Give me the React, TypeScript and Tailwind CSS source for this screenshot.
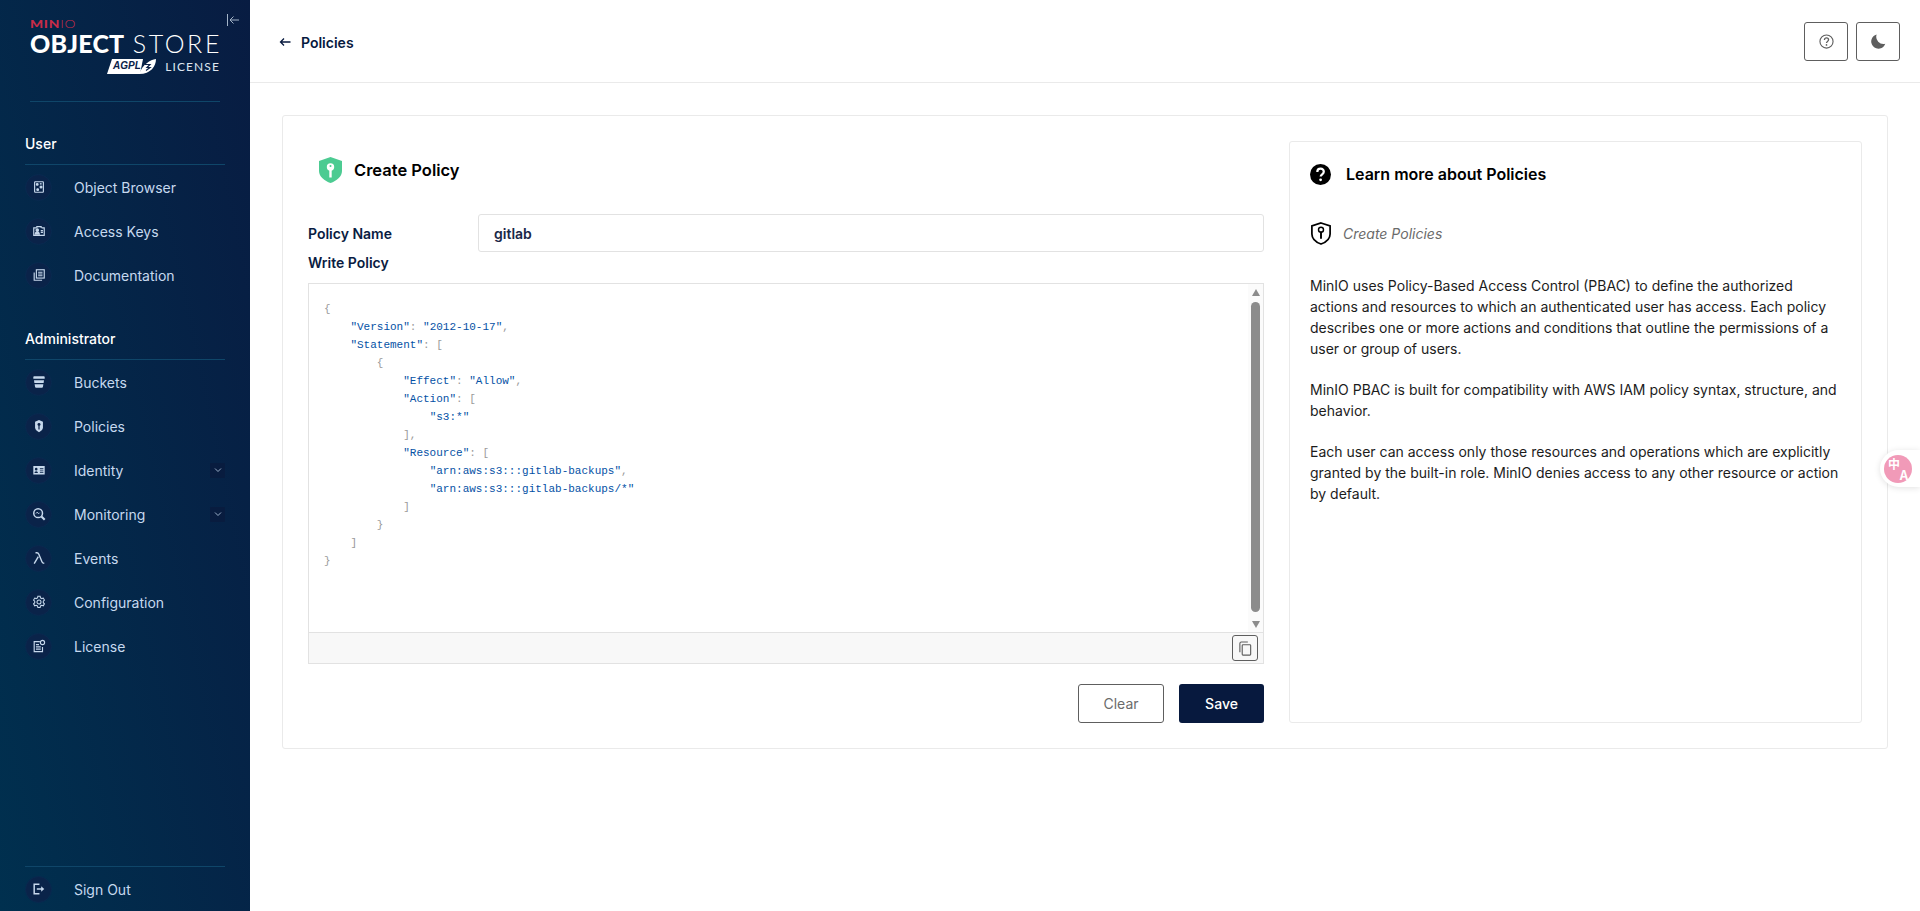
import React from "react";

const S = { viewBox: "0 0 16 16", className: "w-[14px] h-[14px]", fill: "none", stroke: "currentColor", strokeWidth: 1.3 } as const;

const I = {
  browser: (
    <svg {...S}>
      <rect x="3" y="2" width="10" height="12" rx="0.6" />
      <circle cx="6" cy="5" r="1" fill="currentColor" />
      <circle cx="10.3" cy="8" r="1.1" fill="currentColor" />
      <circle cx="6.5" cy="11" r="1" fill="currentColor" />
      <rect x="9" y="3.6" width="2" height="1.6" fill="currentColor" stroke="none" />
    </svg>
  ),
  keys: (
    <svg {...S}>
      <path d="M5 4.5H2v8.5h12V4.5h-3" />
      <circle cx="6" cy="7" r="1.4" fill="currentColor" />
      <path d="M3.6 11.5c.2-1.6 1.2-2.2 2.4-2.2s2.2.6 2.4 2.2z" fill="currentColor" />
      <path d="M10 7.5h2.5M10 9.5h2.5" />
      <path d="M5.5 4.5V3h5v1.5" />
    </svg>
  ),
  docs: (
    <svg {...S}>
      <rect x="5" y="2" width="9" height="9.5" />
      <path d="M2.5 5v9h9" />
      <path d="M7 4.8h5M7 6.8h5M7 8.8h5" />
    </svg>
  ),
  bucket: (
    <svg viewBox="0 0 16 16" className="w-[14px] h-[14px]" fill="currentColor">
      <path d="M1.5 2.400c0-.5.400-.9.900-.9h11.200c.5 0 .9.400.9.9v2H1.500z" />
      <path d="M2.300 6h11.400l-.4 3H2.700z" />
      <path d="M3 10.500h10l-.5 3c-.1.6-.5 1-1.100 1H4.600c-.6 0-1-.4-1.100-1z" />
    </svg>
  ),
  policy: (
    <svg viewBox="0 0 16 16" className="w-[14px] h-[14px]">
      <path d="M8 1.200 12.500 3.200V9.500C12.500 12.300 10.300 14 8 15 5.700 14 3.500 12.300 3.500 9.500V3.200z" fill="currentColor" />
      <circle cx="8" cy="6.300" r="1.700" fill="#0a2148" />
      <path d="M7.300 7.500h1.400v4.500H7.300z" fill="#0a2148" />
    </svg>
  ),
  identity: (
    <svg viewBox="0 0 16 16" className="w-[14px] h-[14px]" fill="currentColor">
      <path fillRule="evenodd" d="M1.500 3.500h13v9.500h-13zM4.800 5.500a1.500 1.500 0 1 0 0 3 1.500 1.500 0 0 0 0-3zM2.800 11.500h4c0-1.300-.8-2.200-2-2.200s-2 .9-2 2.200zM9 6v1h4V6zM9 8.500v1h4v-1zM9 10.500v1h4v-1z" />
    </svg>
  ),
  monitor: (
    <svg {...S} strokeWidth={1.7}>
      <circle cx="7" cy="7" r="5" />
      <path d="M10.800 10.800 14.500 14.500" strokeWidth={2.4} />
      <path d="M4.500 7.500 6 5.800l1.500 2 1.200-1.300" strokeWidth={1} />
    </svg>
  ),
  lambda: (
    <svg viewBox="0 0 16 16" className="w-[14px] h-[14px]" fill="none" stroke="currentColor" strokeWidth={1.600}>
      <path d="M2.500 14.500 7.200 6.500M4 2h1.600c1.200 0 1.700.6 2.200 1.800L11.500 12.500c.4 1 1 1.500 2.500 1.500" />
    </svg>
  ),
  gear: (
    <svg {...S} strokeWidth={1.2}>
      <path d="M6.700 1.500h2.600l.4 1.800 1.500.8 1.700-.6 1.300 2.300-1.300 1.200v1.800l1.300 1.200-1.300 2.300-1.700-.6-1.500.8-.4 1.800H6.700l-.4-1.800-1.500-.8-1.700.6-1.300-2.300 1.300-1.200V7l-1.300-1.200 1.300-2.300 1.700.6 1.500-.8z" />
      <circle cx="8" cy="8" r="2.300" />
    </svg>
  ),
  license: (
    <svg {...S}>
      <path d="M9 3H2.500v11.500h9.500V9" />
      <circle cx="12" cy="4" r="2.400" />
      <path d="M4.500 6.500H8M4.500 9H10M4.500 11.500H10" />
    </svg>
  ),
  signout: (
    <svg viewBox="0 0 16 16" className="w-[14px] h-[14px]" fill="none" stroke="currentColor" strokeWidth={1.700}>
      <path d="M8.500 2.500h-6v11h6" />
      <path d="M5.500 8h6" />
      <path d="M10.500 4.800 14 8l-3.500 3.200z" fill="currentColor" stroke="none" />
    </svg>
  ),
};

function NavItem({ icon, label, chevron }: { icon: React.ReactNode; label: string; chevron?: boolean }) {
  return (
    <div className="h-[44px] flex items-center">
      <div className="w-[27px] h-[27px] rounded-full bg-[#0a2349] border border-[#082a50] flex items-center justify-center text-[#c7d8ec] shrink-0">
        {icon}
      </div>
      <span className="ml-[22px] text-[14px] text-[#c6d9ef] flex-1">{label}</span>
      {chevron && (
        <div className="w-[15px] h-[15px] bg-[#081c3f] rounded-[1px] flex items-center justify-center">
          <svg viewBox="0 0 8 8" className="w-2 h-2" fill="none" stroke="#a9bdd6" strokeWidth={0.9}>
            <path d="M1 2.500 4 5.500 7 2.500" />
          </svg>
        </div>
      )}
    </div>
  );
}

function Section({ title, children, className = "" }: { title: string; children: React.ReactNode; className?: string }) {
  return (
    <div className={`mx-[25px] ${className}`}>
      <div className="text-[14px] leading-[21px] font-medium text-white pb-[10px] border-b border-[#0f4669]">{title}</div>
      {children}
    </div>
  );
}

function Logo() {
  return (
    <div className="h-[102px] mx-[30px] border-b border-[#0f4669] text-white pt-[18px]">
      <div className="text-[11.500px] leading-[12px] tracking-[0.6px] font-black text-[#c72c48] [font-family:Lato,sans-serif] scale-x-[1.2] origin-left">
        MIN<span className="font-light">IO</span>
      </div>
      <div className="flex items-baseline justify-between text-[25px] leading-[26px] [font-family:Lato,sans-serif] whitespace-nowrap">
        <span className="font-black tracking-[0.2px]">OBJECT</span>
        <span className="font-light tracking-[2.6px] mr-[-2px]">STORE</span>
      </div>
      <div className="flex justify-end items-center mt-[2px]">
        <svg viewBox="0 0 50 17" className="w-[50px] h-[17px]">
          <path d="M5 1h31l-3 15H0z" fill="#fff" />
          <text x="6" y="11" fontSize="10" fontStyle="italic" fontWeight="700" fill="#0a2148" fontFamily="Liberation Sans, sans-serif">AGPL</text>
          <path d="M32 16C36 6 43 2 49 1c0 7-5 15-17 15z" fill="#fff" />
          <path d="M38 6.500h5l-3 3h3l-4 3" fill="none" stroke="#0a2148" strokeWidth="1.200" />
        </svg>
        <span className="ml-[8px] text-[12px] leading-[17px] tracking-[1.100px] text-[#dfe7f0] [font-family:Lato,sans-serif]">LICENSE</span>
      </div>
    </div>
  );
}

function Sidebar() {
  return (
    <aside className="relative w-[250px] h-full shrink-0 flex flex-col bg-[linear-gradient(78deg,#00304f_0%,#081c42_100%)]">
      <svg viewBox="0 0 14 14" className="absolute left-[226px] top-[13px] w-[14px] h-[14px]" fill="none" stroke="#a3b4c8" strokeWidth={1}>
        <path d="M1.500 1v12M13 7H4M7.500 3.500 4 7l3.500 3.500" />
      </svg>
      <Logo />
      <Section title="User" className="mt-[31px]">
        <NavItem icon={I.browser} label="Object Browser" />
        <NavItem icon={I.keys} label="Access Keys" />
        <NavItem icon={I.docs} label="Documentation" />
      </Section>
      <Section title="Administrator" className="mt-[31px]">
        <NavItem icon={I.bucket} label="Buckets" />
        <NavItem icon={I.policy} label="Policies" />
        <NavItem icon={I.identity} label="Identity" chevron />
        <NavItem icon={I.monitor} label="Monitoring" chevron />
        <NavItem icon={I.lambda} label="Events" />
        <NavItem icon={I.gear} label="Configuration" />
        <NavItem icon={I.license} label="License" />
      </Section>
      <div className="mt-auto mx-[25px] border-t border-[#0f4669]">
        <NavItem icon={I.signout} label="Sign Out" />
      </div>
    </aside>
  );
}

const K = "text-[#0451a5]";
const P = "text-[#9a9a9a]";
const codeLines: [number, [string, string][]][] = [
  [0, [["{", P]]],
  [1, [['"Version"', K], [": ", P], ['"2012-10-17"', K], [",", P]]],
  [1, [['"Statement"', K], [": ", P], ["[", P]]],
  [2, [["{", P]]],
  [3, [['"Effect"', K], [": ", P], ['"Allow"', K], [",", P]]],
  [3, [['"Action"', K], [": ", P], ["[", P]]],
  [4, [['"s3:*"', K]]],
  [3, [["],", P]]],
  [3, [['"Resource"', K], [": ", P], ["[", P]]],
  [4, [['"arn:aws:s3:::gitlab-backups"', K], [",", P]]],
  [4, [['"arn:aws:s3:::gitlab-backups/*"', K]]],
  [3, [["]", P]]],
  [2, [["}", P]]],
  [1, [["]", P]]],
  [0, [["}", P]]],
];

function Editor() {
  return (
    <div className="h-[381px] border border-[#e2e2e2] flex flex-col">
      <div className="flex-1 flex min-h-0">
        <pre className="flex-1 pl-[15px] pt-[16px] text-[11px] leading-[18px] [font-family:'Liberation_Mono',monospace]">
          {codeLines.map(([ind, segs], i) => (
            <div key={i}>
              {"    ".repeat(ind)}
              {segs.map(([t, c], j) => (
                <span key={j} className={c}>
                  {t}
                </span>
              ))}
            </div>
          ))}
        </pre>
        <div className="w-[15px] bg-[#fbfbfb] flex flex-col items-center pt-[5px]">
          <div className="w-0 h-0 border-x-[4.500px] border-x-transparent border-b-[7px] border-b-[#8c8c8c]" />
          <div className="w-[9px] h-[310px] mt-[6px] rounded-full bg-[#8c8c8c]" />
          <div className="w-0 h-0 mt-[9px] border-x-[4.500px] border-x-transparent border-t-[7px] border-t-[#8c8c8c]" />
        </div>
      </div>
      <div className="h-[31px] bg-[#f8f8f8] border-t border-[#e2e2e2] flex items-center justify-end pr-[5px]">
        <div className="w-[26px] h-[26px] border border-[#5e5e5e] rounded-[3px] flex items-center justify-center">
          <svg viewBox="0 0 16 16" className="w-[15px] h-[15px]" fill="none" stroke="#5e5e5e" strokeWidth={1.200}>
            <rect x="4.500" y="4" width="9" height="11" rx="0.800" />
            <path d="M2 12V2.600C2 1.700 2.700 1 3.600 1H10.500" />
          </svg>
        </div>
      </div>
    </div>
  );
}

function InfoPanel() {
  return (
    <div className="w-[573px] h-[582px] border border-[#eaeaea] rounded-[3px] shrink-0 pl-[20px] pr-[20px] text-[14px] leading-[21px] text-[#1c1c1c]">
      <div className="h-[43px] mt-[11px] flex items-center">
        <svg viewBox="0 0 21 21" className="w-[21px] h-[21px]">
          <circle cx="10.500" cy="10.500" r="10.500" fill="#000" />
          <path d="M7.300 8c0-2 1.400-3.300 3.300-3.300S13.800 5.900 13.800 7.700c0 2.600-3.100 2.600-3.100 4.900" fill="none" stroke="#fff" strokeWidth="2.200" />
          <circle cx="10.600" cy="15.800" r="1.400" fill="#fff" />
        </svg>
        <span className="ml-[15px] text-[16px] font-semibold text-black">Learn more about Policies</span>
      </div>
      <div className="flex items-center h-[24px] mt-[25px]">
        <svg viewBox="0 0 22 24" className="w-[22px] h-[23px]">
          <path d="M11 1 20.500 4v8.500c0 5-4.500 8.700-9.500 10.500C6 21.200 1.500 17.500 1.500 12.500V4z" fill="none" stroke="#000" strokeWidth="1.800" />
          <circle cx="11" cy="8" r="2.600" fill="none" stroke="#000" strokeWidth="1.500" />
          <path d="M11 10v7.500" stroke="#000" strokeWidth="2" />
        </svg>
        <span className="ml-[11px] italic text-[#6b6b6b]">Create Policies</span>
      </div>
      <div className="mt-[30px] space-y-[20px]">
        <p>
          MinIO uses Policy-Based Access Control (PBAC) to define the authorized actions and resources to which an
          authenticated user has access. Each policy describes one or more actions and conditions that outline the
          permissions of a user or group of users.
        </p>
        <p>MinIO PBAC is built for compatibility with AWS IAM policy syntax, structure, and behavior.</p>
        <p>
          Each user can access only those resources and operations which are explicitly granted by the built-in role.
          MinIO denies access to any other resource or action by default.
        </p>
      </div>
    </div>
  );
}

function FormColumn() {
  return (
    <div className="w-[956px] shrink-0 flex flex-col">
      <div className="h-[58px] mb-[15px] pl-[11px] flex items-center">
        <svg viewBox="0 0 23 26" className="w-[23px] h-[26px]">
          <path d="M11.500 0 23 4v10c0 5.500-5.500 10-11.500 12C5.500 24 0 19.500 0 14V4z" fill="#4ccb92" />
          <circle cx="11.500" cy="10" r="3.700" fill="#fff" />
          <path d="M10.300 12h2.400v8.500h-2.400z" fill="#fff" />
          <circle cx="11.500" cy="9" r="1" fill="#4ccb92" />
        </svg>
        <span className="ml-[12px] text-[16.500px] font-semibold text-black">Create Policy</span>
      </div>
      <div className="flex items-center h-[38px]">
        <label className="w-[170px] text-[14px] font-semibold text-[#0a1c42]">Policy Name</label>
        <div className="flex-1 h-full border border-[#e2e2e2] rounded-[3px] flex items-center pl-[15px] text-[14px] font-semibold text-[#1a2747]">
          gitlab
        </div>
      </div>
      <div className="text-[14px] leading-[21px] font-semibold text-[#0a1c42] mb-[10px]">Write Policy</div>
      <Editor />
      <div className="flex justify-end gap-[15px] mt-[20px]">
        <button className="w-[86px] h-[39px] border border-[#5e5e5e] rounded-[3px] text-[14px] text-[#6b6b6b]">Clear</button>
        <button className="w-[85px] h-[39px] bg-[#07193e] rounded-[3px] text-[14px] font-medium text-white">Save</button>
      </div>
    </div>
  );
}

function Header() {
  const btn = "w-[44px] h-[39px] border border-[#5e5e5e] rounded-[3px] flex items-center justify-center";
  return (
    <header className="h-[83px] border-b border-[#eaeaea] flex items-center pl-[29px] pr-[20px] shrink-0">
      <svg viewBox="0 0 12 12" className="w-[12px] h-[12px] mt-[1px]" fill="none" stroke="#07193e" strokeWidth={1.300}>
        <path d="M11.500 6H1.500M5 2.500 1.500 6 5 9.500" />
      </svg>
      <span className="ml-[10px] mt-[2px] text-[14px] font-semibold text-[#07193e]">Policies</span>
      <div className="ml-auto flex gap-[8px]">
        <div className={btn}>
          <svg viewBox="0 0 16 16" className="w-[15px] h-[15px]" fill="none" stroke="#5e5e5e" strokeWidth={1.200}>
            <circle cx="8" cy="8" r="7" />
            <path d="M5.800 6.300C5.800 5 6.800 4.200 8 4.200s2.200.8 2.200 2c0 1.700-2.200 1.700-2.200 3.300" strokeWidth={1.400} />
            <circle cx="8" cy="11.600" r="0.900" fill="#5e5e5e" stroke="none" />
          </svg>
        </div>
        <div className={btn}>
          <svg viewBox="0 0 16 16" className="w-[15px] h-[15px]">
            <path d="M6 .5A7.800 7.800 0 0 0 15.200 10.500 7.700 7.700 0 1 1 6 .5z" fill="#5e5e5e" />
          </svg>
        </div>
      </div>
    </header>
  );
}

export default function App() {
  return (
    <div className="relative h-screen w-full overflow-hidden flex bg-white [font-family:Inter,sans-serif]">
      <Sidebar />
      <main className="flex-1 flex flex-col min-w-0">
        <Header />
        <div className="pl-[32px] pr-[32px] pt-[32px]">
          <div className="h-[634px] border border-[#eaeaea] rounded-[3px] pt-[25px] pl-[25px] flex gap-[25px]">
            <FormColumn />
            <InfoPanel />
          </div>
        </div>
      </main>
      <div className="absolute right-0 top-[450px] w-[40px] h-[37px] rounded-l-full bg-white shadow-[0_1px_6px_rgba(0,0,0,0.12)] flex items-center pl-[4px]">
        <div className="relative w-[28px] h-[28px] rounded-full bg-[#f19ab8] text-white font-semibold [font-family:'Noto_Sans_CJK_SC',sans-serif]">
          <span className="absolute left-[4px] top-[2px] text-[12px] leading-[13px]">中</span>
          <span className="absolute right-[4px] bottom-[2px] text-[13px] leading-[13px]">A</span>
        </div>
      </div>
    </div>
  );
}
